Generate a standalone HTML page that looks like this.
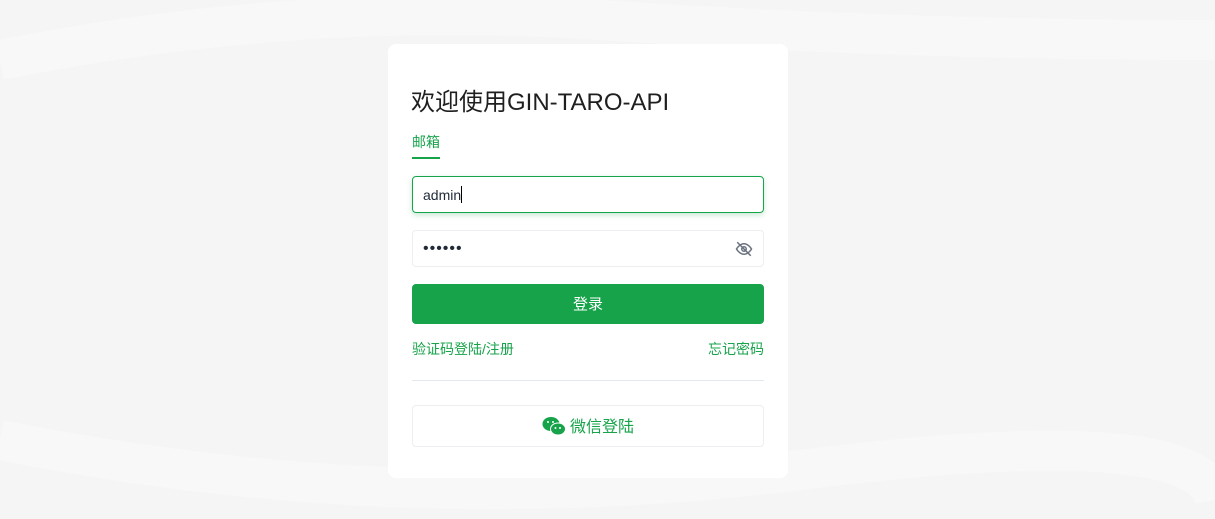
<!DOCTYPE html>
<html><head><meta charset="utf-8"><style>
*{box-sizing:border-box;margin:0;padding:0}
body{width:1215px;height:519px;background:#f5f5f5;font-family:"Liberation Sans","Noto Sans CJK SC",sans-serif;position:relative;overflow:hidden}
.bg{position:absolute;inset:0}
.card{position:absolute;left:388px;top:44px;width:400px;height:434px;background:#fff;border-radius:8px}
.a{position:absolute}
h1{position:absolute;left:23px;top:38px;font-size:24px;font-weight:400;color:#1f1f1f;white-space:nowrap}
.tab{left:24px;top:88px;font-size:14px;color:#16a34a}
.ul{left:24px;top:113px;width:28px;height:2px;background:#16a34a}
.in{left:24px;width:352px;height:37px;border:1px solid #eceef2;border-radius:4px;font-size:14px;color:#1f2937;padding-left:10px;line-height:36px}
.btn{left:24px;top:240px;width:352px;height:40px;background:#16a34a;border-radius:4px;color:#fff;font-size:15px;text-align:center;line-height:41px}
.lk{top:295px;font-size:14px;color:#16a34a}
.hr{left:24px;top:336px;width:352px;height:1px;background:#e2e8f0}
.wx{left:24px;top:361px;width:352px;height:42px;border:1px solid #eceef2;border-radius:4px;text-align:center;line-height:44px;font-size:16px;color:#16a34a}
</style></head><body>
<svg class="bg" width="1215" height="519"><path d="M0 60 Q300 0 600 20 T1215 40" stroke="#f8f8f8" stroke-width="40" fill="none"/><path d="M0 440 Q400 520 800 470 T1215 500" stroke="#f8f8f8" stroke-width="40" fill="none"/></svg>
<div class="card">
<h1>欢迎使用GIN-TARO-API</h1>
<div class="a tab">邮箱</div><div class="a ul"></div>
<div class="a in" style="top:132px;border-color:#16a34a;box-shadow:0 2px 6px rgba(22,163,74,.25)">admin<span style="display:inline-block;width:1px;height:17px;background:#000;vertical-align:-3px"></span></div>
<div class="a in" style="top:186px;font-size:16px;letter-spacing:1px">••••••
<svg style="position:absolute;right:10px;top:9px" width="18" height="18" viewBox="0 0 24 24" fill="none" stroke="#6b7280" stroke-width="2"><path d="M2 12s4-7 10-7 10 7 10 7-4 7-10 7S2 12 2 12z"/><circle cx="12" cy="12" r="3"/><path d="M3 3l18 18"/></svg></div>
<div class="a btn">登录</div>
<div class="a lk" style="left:24px">验证码登陆/注册</div>
<div class="a lk" style="right:24px">忘记密码</div>
<div class="a hr"></div>
<div class="a wx"><svg width="24" height="20" viewBox="0 0 24 20" style="vertical-align:-4px;margin-right:4px"><ellipse cx="9" cy="8" rx="8.5" ry="7" fill="#16a34a"/><ellipse cx="16" cy="13" rx="7.5" ry="6" fill="#16a34a" stroke="#fff" stroke-width="1"/><circle cx="6" cy="6" r="1" fill="#fff"/><circle cx="11" cy="6" r="1" fill="#fff"/><circle cx="13.5" cy="12" r="1" fill="#fff"/><circle cx="18" cy="12" r="1" fill="#fff"/></svg>微信登陆</div>
</div>
</body></html>
